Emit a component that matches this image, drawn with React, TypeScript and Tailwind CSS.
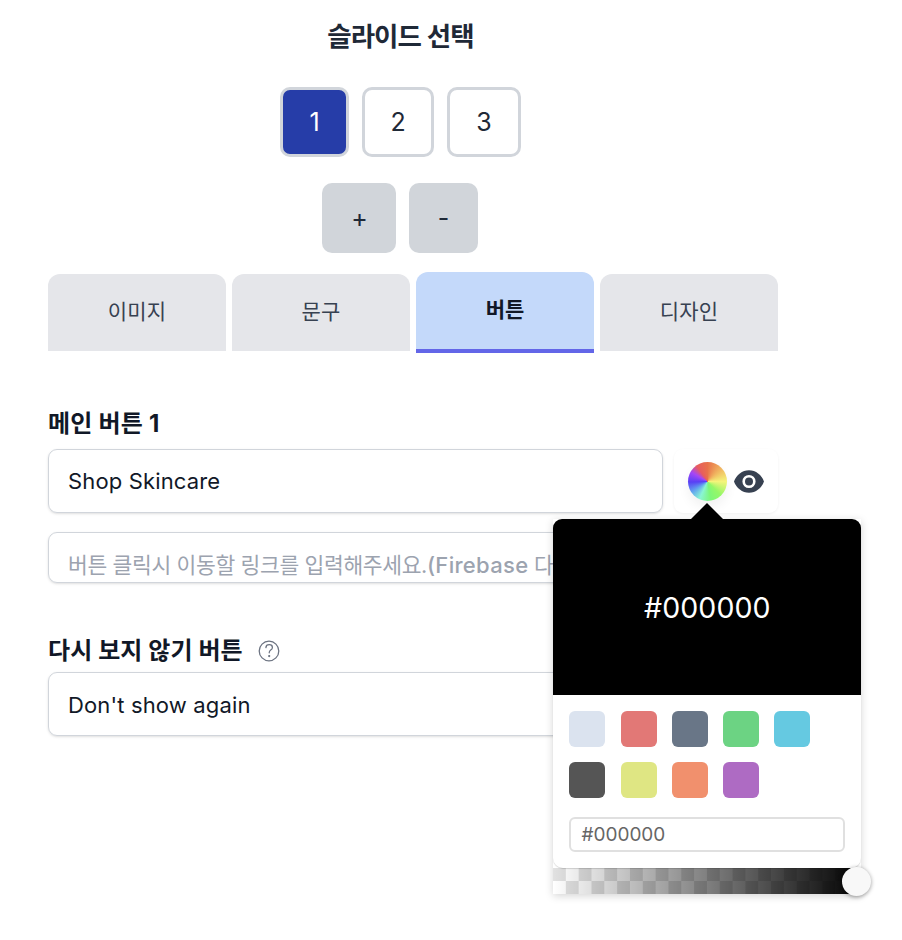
import React from "react";

const FONT = "font-['Inter','Noto_Sans_CJK_KR',sans-serif]";

const swatches = [
  "bg-[#dbe3ef]",
  "bg-[#e27876]",
  "bg-[#697687]",
  "bg-[#6cd383]",
  "bg-[#65c9e1]",
  "bg-[#555555]",
  "bg-[#dfe683]",
  "bg-[#f1906d]",
  "bg-[#ae6bc3]",
];

function SlideSelector() {
  return (
    <section className="flex w-[801px] flex-col items-center text-[25px] text-[#1f2937]">
      <h1 className="mt-[18px] h-9 whitespace-nowrap text-[26.500px] leading-9 font-semibold tracking-[-0.9px]">슬라이드 선택</h1>
      <div className="mt-[33px] flex gap-[13px]">
        <button className="h-[70px] w-[69px] rounded-[10px] border-[3px] border-[#d1d5db] bg-[#263da8] pt-0.5 text-white">1</button>
        <button className="h-[70px] w-[72px] rounded-[10px] border-[3px] border-[#d1d5db] bg-white pt-0.5">2</button>
        <button className="h-[70px] w-[74px] rounded-[10px] border-[3px] border-[#d1d5db] bg-white pt-0.5">3</button>
      </div>
      <div className="mt-[26px] mr-0.5 flex gap-[13px]">
        <button className="h-[70px] w-[74px] rounded-[10px] bg-[#d1d5da] pt-0.5 pl-0.5 text-[25px]">+</button>
        <button className="h-[70px] w-[69px] rounded-[10px] bg-[#d1d5da] pt-0.5 pl-px text-[25px]">-</button>
      </div>
    </section>
  );
}

function Tab({ label, active = false }: { label: string; active?: boolean }) {
  return (
    <button
      className={
        active
          ? "h-[81px] w-[178px] rounded-t-xl border-b-4 border-[#6366e8] bg-[#c4d9fa] pb-0.5 text-[21px] font-semibold text-[#111827]"
          : "h-[77px] w-[178px] rounded-t-xl bg-[#e5e6ea] pb-0.5 text-[21px] tracking-[0.1px] text-[#374151]"
      }
    >
      {label}
    </button>
  );
}

function ColorWheel() {
  return (
    <div className="h-[39px] w-[39px] rounded-full bg-[conic-gradient(from_0deg,#e8714a,#f0b35f_45deg,#f4f47a_90deg,#96f768_135deg,#7df779_170deg,#8af5d4_205deg,#63a8ee_235deg,#5840f5_268deg,#a546f7_300deg,#e75c5f_325deg,#e8714a)] shadow-[0_6px_12px_rgba(0,0,0,0.06)]" />
  );
}

function EyeIcon() {
  return (
    <svg width="30" height="23" viewBox="0 0 30 23" fill="none">
      <path d="M15 .3C8.2.3 2.4 4.9 0 11.5 2.4 18.1 8.2 22.7 15 22.7S27.6 18.1 30 11.5C27.6 4.900 21.8.3 15 .3Z" fill="#374151" />
      <circle cx="15" cy="11.5" r="5.3" fill="#374151" stroke="white" strokeWidth="2.6" />
    </svg>
  );
}

function HelpIcon() {
  return (
    <svg width="22" height="22" viewBox="0 0 22 22" fill="none" stroke="#6b7280" strokeWidth="1.25" strokeLinecap="round">
      <circle cx="11" cy="11" r="9.8" />
      <path d="M7.900 7.600C8 5.700 9.300 4.700 11.200 4.700c1.900 0 3.200 1.100 3.200 2.700 0 1.400-.8 2.100-1.700 2.700-1 .7-1.500 1.300-1.500 2.700" />
      <circle cx="11.200" cy="16" r=".5" fill="#6b7280" />
    </svg>
  );
}

function ColorPicker() {
  return (
    <div className="absolute top-[519px] left-[553.400px] w-[308px]">
      <svg className="absolute -top-4 left-[138px]" width="32" height="17" viewBox="0 0 32 17">
        <path d="M16 0 32 16v1H0v-1Z" fill="black" />
      </svg>
      <div className="shadow-[0_2px_8px_rgba(0,0,0,0.17)]">
        <div className="relative z-10 h-[349px] rounded-[10px] bg-white shadow-[0_1px_1px_rgba(0,0,0,0.15)]">
          <div className="flex h-[176px] items-center justify-center rounded-t-[9px] bg-black pt-0.5 text-[28.500px] tracking-[0.1px] text-white">
            <span>#000000</span>
          </div>
          <div className="grid grid-cols-[repeat(5,36px)] gap-x-[15.200px] gap-y-[15px] pt-4 pl-4">
            {swatches.map((color) => (
              <div key={color} className={`h-9 w-9 rounded-[6px] ${color}`} />
            ))}
          </div>
          <div className="mx-4 mt-[19px] flex h-[35px] items-center rounded-[6px] border-2 border-[#e0e0e0] pt-0.5 pl-[10px] text-[19px] text-[#666666]">
            #000000
          </div>
        </div>
        <div className="relative h-[26px] bg-[repeating-conic-gradient(#ffffff_0_25%,#e1e1e1_0_50%)] bg-[length:25.670px_26px] bg-[position:0_0]">
          <div className="h-full bg-linear-to-r from-transparent to-black" />
          <div className="absolute -top-[1px] -right-[10px] z-20 h-[29px] w-[29px] rounded-full bg-[#f8f8f8] shadow-[0_1px_4px_rgba(0,0,0,0.4)]" />
        </div>
      </div>
    </div>
  );
}

export default function App() {
  return (
    <main className={`relative h-[940px] w-[902px] overflow-hidden bg-white ${FONT}`}>
      <SlideSelector />
      <nav className="ml-12 mt-[19px] flex h-[81px] w-[730px] items-center gap-[6px]">
        <Tab label="이미지" />
        <Tab label="문구" />
        <Tab label="버튼" active />
        <Tab label="디자인" />
      </nav>
      <section className="ml-12 w-[730px] text-[#111827]">
        <h2 className="mt-[55px] h-8 whitespace-nowrap text-[24px] leading-8 font-bold tracking-[0.2px]">메인 버튼 1</h2>
        <div className="mt-[9px] flex gap-[11px]">
          <div className="flex h-16 w-[615px] items-center rounded-[9px] border border-[#d1d5db] pl-[19px] text-[22px] tracking-[0.15px] shadow-sm">Shop Skincare</div>
          <div className="flex h-16 w-[104px] items-center gap-[7px] rounded-[9px] pl-[14px] shadow-[0_1px_3px_rgba(0,0,0,0.06)]">
            <ColorWheel />
            <EyeIcon />
          </div>
        </div>
        <div className="mt-[19px] h-[51px] overflow-hidden rounded-[9px] border border-[#d1d5db] pt-4 pl-[19px] text-[21.500px] leading-8 tracking-[-0.35px] whitespace-nowrap text-[#9ca3af] shadow-sm">
          버튼 클릭시 이동할 링크를 입력해주세요.<span className="text-[22px] font-medium tracking-[0.3px]">(Firebase</span> 다이나믹 링크)
        </div>
        <div className="mt-[52px] flex h-8 items-center gap-[15px]">
          <h2 className="whitespace-nowrap text-[24px] leading-8 font-bold tracking-[0.1px]">다시 보지 않기 버튼</h2>
          <HelpIcon />
        </div>
        <div className="mt-[5px] flex h-16 items-center rounded-[9px] border border-[#d1d5db] pt-0.5 pl-[19px] text-[22px] tracking-[0.15px] shadow-sm">Don't show again</div>
      </section>
      <ColorPicker />
    </main>
  );
}
